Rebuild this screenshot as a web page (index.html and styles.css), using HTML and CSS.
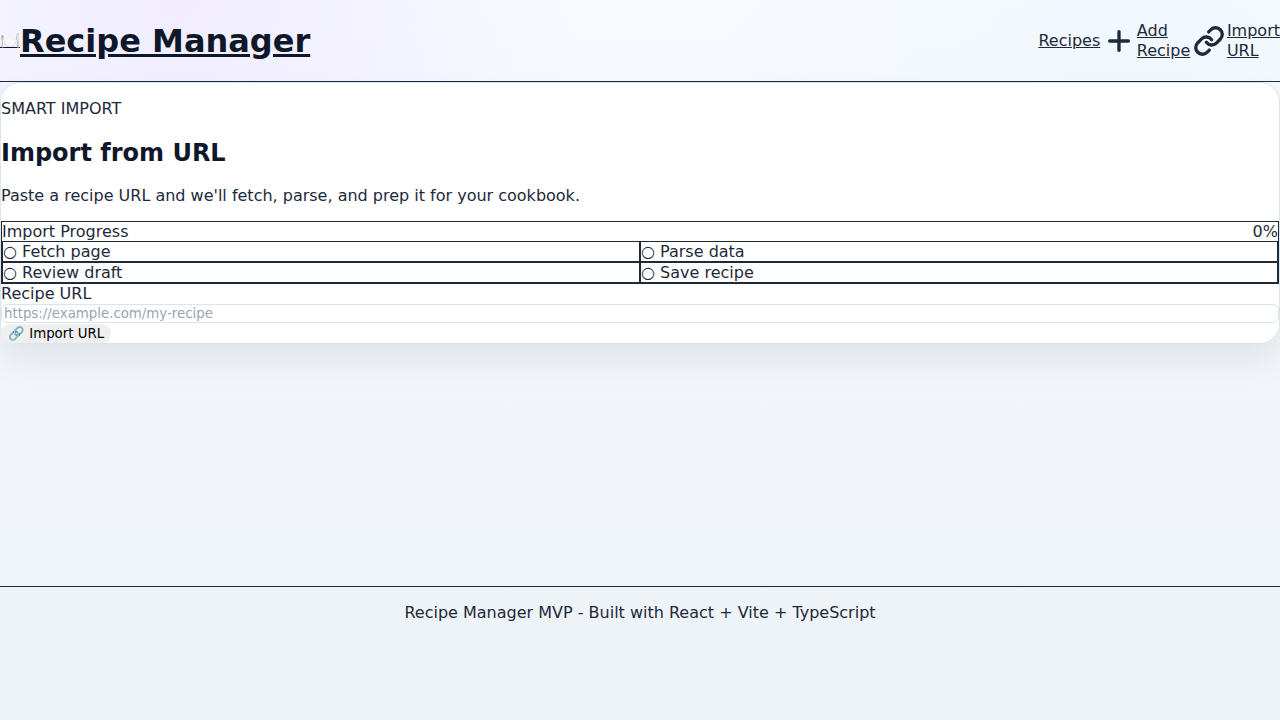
FILE: index.html
```html
<!DOCTYPE html>
<html lang="en">
<head>
    <meta charset="UTF-8">
    <meta name="viewport" content="width=device-width, initial-scale=1.0">
    <title>Recipe Manager</title>
    <link rel="stylesheet" href="styles.css">
</head>
<body>
<header class="site-header">
    <a class="brand" href="#"><span class="brand-icon">🍽️</span><span>Recipe Manager</span></a>
    <nav class="site-nav">
        <a class="nav-link" href="#">Recipes</a>
        <a class="nav-link" href="#">
            <svg class="nav-icon" viewBox="0 0 24 24" fill="none" stroke="currentColor" stroke-width="2.5" stroke-linecap="round" stroke-linejoin="round"><path d="M5 12h14"/><path d="M12 5v14"/></svg>
            <span>Add Recipe</span>
        </a>
        <a class="nav-link" href="#">
            <svg class="nav-icon" viewBox="0 0 24 24" fill="none" stroke="currentColor" stroke-width="2.5" stroke-linecap="round" stroke-linejoin="round"><path d="M10 13a5 5 0 0 0 7.54.54l3-3a5 5 0 0 0-7.07-7.07l-1.72 1.71"/><path d="M14 11a5 5 0 0 0-7.54-.54l-3 3a5 5 0 0 0 7.07 7.07l1.71-1.71"/></svg>
            <span>Import URL</span>
        </a>
    </nav>
</header>

<main class="site-main">
    <section class="import-card">
        <p class="eyebrow">SMART IMPORT</p>
        <h2>Import from URL</h2>
        <p class="intro">Paste a recipe URL and we'll fetch, parse, and prep it for your cookbook.</p>
        <div class="progress">
            <div class="progress-head"><span>Import Progress</span><span>0%</span></div>
            <div class="progress-steps">
                <div class="step">○ Fetch page</div>
                <div class="step">○ Parse data</div>
                <div class="step">○ Review draft</div>
                <div class="step">○ Save recipe</div>
            </div>
        </div>
        <form class="import-form">
            <label for="recipeUrl">Recipe URL</label>
            <input type="url" id="recipeUrl" placeholder="https://example.com/my-recipe">
            <button type="button">🔗 Import URL</button>
        </form>
    </section>
</main>

<footer class="site-footer">
    <p>Recipe Manager MVP - Built with React + Vite + TypeScript</p>
</footer>
</body>
</html>
```
FILE: styles.css
```css
html {
    background: #edf2f6;
}
body {
    margin: 0;
    min-height: 720px;
    font-family: "DejaVu Sans", sans-serif;
    font-size: 16px;
    color: #1e293b;
    background:
        radial-gradient(circle at 14% 0%, rgba(237, 228, 255, 0.6), transparent 30%),
        radial-gradient(circle at 88% 0%, rgba(224, 242, 254, 0.25), transparent 30%),
        linear-gradient(180deg, #f7faff 0%, #edf2f6 100%);
}
.site-header {
    height: 81px;
    display: flex;
    justify-content: space-between;
    align-items: center;
    border-bottom: 1px solid #1e293b;
}
.brand {
    display: flex;
    align-items: center;
    font-size: 32px;
    font-weight: 700;
    color: #0f172a;
}
.brand-icon {
    font-size: 16px;
    width: 20px;
    overflow: hidden;
}
.site-nav {
    display: flex;
    align-items: center;
    gap: 3px;
}
.nav-link {
    display: flex;
    align-items: center;
    gap: 1.6px;
    color: #1e293b;
    line-height: 20px;
}
.nav-link span {
    display: block;
    width: min-content;
}
.nav-icon {
    width: 32px;
    height: 32px;
    flex: none;
}
.site-main {
    min-height: 504px;
}
.import-card {
    background: #fff;
    border: 1px solid #d8e4ee;
    border-radius: 20px;
    box-shadow: 0 16px 32px rgba(15, 23, 42, 0.08);
}
.eyebrow {
    margin: 16px 0;
}
.import-card h2 {
    margin: 21px 0 19px;
    font-size: 24px;
    color: #0f172a;
}
.intro {
    margin: 16px 0;
}
.progress {
    border: 1px solid #1e293b;
}
.progress-head {
    display: flex;
    justify-content: space-between;
}
.progress-steps {
    display: grid;
    grid-template-columns: 1fr 1fr;
}
.step {
    border: 1px solid #1e293b;
}
.import-form label {
    display: block;
    line-height: 20px;
}
.import-form input {
    display: block;
    width: 100%;
    box-sizing: border-box;
    border: 1px solid #d8e4ee;
    border-radius: 6px;
    padding: 1px 2px;
    font-family: inherit;
    font-size: 13.33px;
}
.import-form input::placeholder {
    color: #9ca3af;
}
.import-form button {
    display: block;
    margin-top: 1px;
    height: 19px;
    border: none;
    border-radius: 999px;
    background: #efefef;
    color: #000;
    padding: 1px 7px;
    font-family: inherit;
    font-size: 13.33px;
    line-height: 17px;
}
.site-footer {
    border-top: 1px solid #1e293b;
    text-align: center;
}
.site-footer p {
    margin: 16px 0;
}
```
